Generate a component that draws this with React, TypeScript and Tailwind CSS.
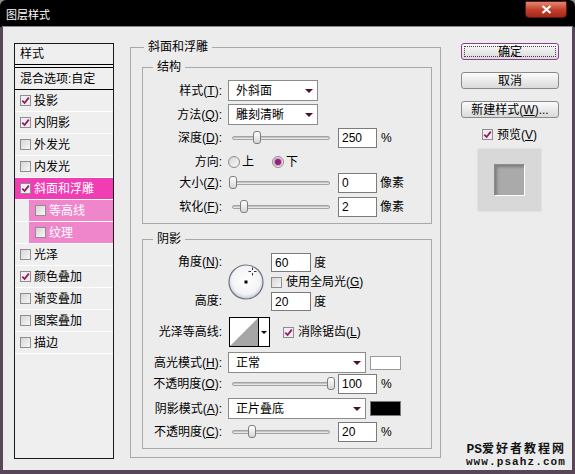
import React from 'react'

type StyleRow = { label: string; checked?: boolean; active?: boolean; sub?: boolean }

const STYLE_ROWS: StyleRow[] = [
  { label: '投影', checked: true },
  { label: '内阴影', checked: true },
  { label: '外发光' },
  { label: '内发光' },
  { label: '斜面和浮雕', checked: true, active: true },
  { label: '等高线', sub: true },
  { label: '纹理', sub: true },
  { label: '光泽' },
  { label: '颜色叠加', checked: true },
  { label: '渐变叠加' },
  { label: '图案叠加' },
  { label: '描边' },
]

function Check({ checked }: { checked?: boolean }) {
  return (
    <span
      className={`flex h-[11px] w-[11px] shrink-0 items-center justify-center border border-[#8e8e8e] ${
        checked ? 'bg-[#f4eaf2]' : 'bg-linear-to-br from-[#d6d6d6] to-[#f7f7f7]'
      }`}
    >
      {checked && (
        <svg width="9" height="9" viewBox="0 0 9 9">
          <path d="M1.3 4.6 L3.6 7 L7.8 1.6" fill="none" stroke="#8a1d5c" strokeWidth="1.8" />
        </svg>
      )}
    </span>
  )
}

function Radio({ on }: { on?: boolean }) {
  return (
    <span className="flex h-[12px] w-[12px] shrink-0 items-center justify-center rounded-full border border-[#8c8c8c] bg-linear-to-br from-[#d4d4d4] to-[#fafafa]">
      {on && <span className="h-[6px] w-[6px] rounded-full bg-[#961f7a] shadow-[0_0_0_1px_#d08cc0]" />}
    </span>
  )
}

function Arrow() {
  return <span className="h-0 w-0 border-x-[4px] border-t-[4px] border-x-transparent border-t-[#4a1030]" />
}

function Dropdown({ value, className }: { value: string; className: string }) {
  return (
    <div className={`ml-[6px] flex h-[21px] items-center justify-between border border-[#8b8b8b] bg-white pl-[7px] pr-[4px] ${className}`}>
      <span>{value}</span>
      <Arrow />
    </div>
  )
}

function NumBox({ value, className = 'ml-[8px] h-[20px] w-[39px]' }: { value: string; className?: string }) {
  return <div className={`flex items-center border border-[#7b7b7b] bg-white pl-[3px] ${className}`}>{value}</div>
}

function Slider({ thumb }: { thumb: string }) {
  return (
    <div className="relative ml-[10px] h-[4px] w-[98px] rounded-full border border-[#a3a3a3] bg-[#e6e6e6] shadow-[inset_0_1px_0_#c4c4c4]">
      <span className={`absolute top-[-6px] h-[13px] w-[8px] rounded-[3px] border border-[#7d7d7d] bg-linear-to-b from-white to-[#d6d6d6] ${thumb}`} />
    </div>
  )
}

function Row({ label, className, children }: { label: React.ReactNode; className: string; children?: React.ReactNode }) {
  return (
    <div className={`flex items-center ${className}`}>
      <div className="w-[79px] shrink-0 text-right">{label}</div>
      {children}
    </div>
  )
}

function Btn({ children, primary }: { children: React.ReactNode; primary?: boolean }) {
  return (
    <button
      className={`flex h-[17px] w-[98px] items-center justify-center rounded-[3px] border bg-linear-to-b from-[#fbfbfb] to-[#dadada] ${
        primary ? 'border-[#8e3c8e] p-[2px]' : 'border-[#8a8a8a]'
      }`}
    >
      {primary ? (
        <span className="flex h-full w-full items-center justify-center border border-dotted border-[#444]">{children}</span>
      ) : (
        <span>{children}</span>
      )}
    </button>
  )
}

export default function App() {
  return (
    <div className="h-[474px] w-[575px] bg-[#8f8f8f] font-['Liberation_Sans','Noto_Sans_CJK_SC',sans-serif] text-[12px] leading-[14px] text-black">
      <div className="flex h-full flex-col overflow-hidden rounded-t-[6px] bg-black">
        {/* title bar */}
        <div className="flex h-[26px] shrink-0 items-start">
          <span className="ml-[6px] mt-[8px] text-[11px] leading-[14px] text-white">图层样式</span>
          <button className="ml-auto mr-[8px] mt-[1px] flex h-[17px] w-[42px] items-center justify-center rounded-b-[4px] border border-[#5a1a10] bg-linear-to-b from-[#e08670] via-[#c4402c] to-[#a32818]">
            <svg width="11" height="9" viewBox="0 0 11 9">
              <path d="M1.5 1 L9.5 8 M9.5 1 L1.5 8" stroke="#fff" strokeWidth="2.2" />
            </svg>
          </button>
        </div>
        <div className="mx-[2px] h-px shrink-0 bg-[#8a8a8a]" />

        {/* body */}
        <div className="flex min-h-0 flex-1 border-x-[3px] border-b-[4px] border-[#574657] bg-[#ececec]">
          {/* style list */}
          <div className="ml-[11px] mt-[16px] h-[416px] w-[100px] shrink-0 border border-[#1a1a1a] bg-[#efefef]">
            <div className="flex h-[21px] items-center border-b border-black pl-[5px]">样式</div>
            <div className="mt-[2px] flex h-[23px] items-center border-y border-black pl-[5px]">混合选项:自定</div>
            {STYLE_ROWS.map((r) =>
              r.sub ? (
                <div key={r.label} className="h-[22px] border-b border-white pl-[14px]">
                  <div className="flex h-full items-center gap-[3px] bg-[#ef86cc] pl-[6px] text-white">
                    <Check checked={r.checked} />
                    <span>{r.label}</span>
                  </div>
                </div>
              ) : (
                <div
                  key={r.label}
                  className={`flex h-[22px] items-center gap-[3px] border-b border-white pl-[5px] ${
                    r.active ? 'bg-[#f03db3] text-white' : ''
                  }`}
                >
                  <Check checked={r.checked} />
                  <span>{r.label}</span>
                </div>
              )
            )}
          </div>

          {/* bevel & emboss */}
          <fieldset className="ml-[16px] mt-[12px] h-[419px] w-[311px] shrink-0 border border-[#a9a9a9]">
            <legend className="ml-[13px] px-[4px] leading-[16px]">斜面和浮雕</legend>

            <fieldset className="ml-[11px] mt-[4px] h-[165px] w-[290px] border border-[#a9a9a9]">
              <legend className="ml-[10px] px-[4px] leading-[16px]">结构</legend>
              <Row label={<>样式(<u>T</u>):</>} className="mt-[5px] h-[21px]">
                <Dropdown value="外斜面" className="w-[90px]" />
              </Row>
              <Row label={<>方法(<u>Q</u>):</>} className="mt-[3px] h-[21px]">
                <Dropdown value="雕刻清晰" className="w-[90px]" />
              </Row>
              <Row label={<>深度(<u>D</u>):</>} className="mt-[3px] h-[20px]">
                <Slider thumb="left-[20px]" />
                <NumBox value="250" />
                <span className="ml-[4px]">%</span>
              </Row>
              <Row label="方向:" className="mt-[4px] h-[20px]">
                <span className="ml-[6px]">
                  <Radio />
                </span>
                <span className="ml-[2px]">上</span>
                <span className="ml-[18px]">
                  <Radio on />
                </span>
                <span className="ml-[2px]">下</span>
              </Row>
              <Row label={<>大小(<u>Z</u>):</>} className="mt-[1px] h-[20px]">
                <Slider thumb="left-[-4px]" />
                <NumBox value="0" />
                <span className="ml-[3px]">像素</span>
              </Row>
              <Row label={<>软化(<u>F</u>):</>} className="mt-[4px] h-[20px]">
                <Slider thumb="left-[7px]" />
                <NumBox value="2" />
                <span className="ml-[3px]">像素</span>
              </Row>
            </fieldset>

            <fieldset className="ml-[11px] mt-[7px] h-[218px] w-[290px] border border-[#a9a9a9]">
              <legend className="ml-[10px] px-[4px] leading-[16px]">阴影</legend>

              <div className="mt-[6px] flex">
                <div className="flex h-[58px] w-[79px] shrink-0 flex-col justify-between text-right">
                  <div className="h-[19px] leading-[19px]">
                    角度(<u>N</u>):
                  </div>
                  <div className="h-[19px] leading-[19px]">高度:</div>
                </div>
                <div className="ml-[6px] self-center">
                  <svg width="36" height="36" viewBox="0 0 36 36">
                    <defs>
                      <radialGradient id="dial" cx="50%" cy="45%" r="55%">
                        <stop offset="0" stopColor="#ffffff" />
                        <stop offset="0.75" stopColor="#f3f3f5" />
                        <stop offset="1" stopColor="#c3c8d4" />
                      </radialGradient>
                    </defs>
                    <circle cx="18" cy="18" r="17" fill="url(#dial)" stroke="#6d7483" strokeWidth="1.2" />
                    <rect x="16.5" y="16.5" width="3" height="3" fill="#000" />
                    <path d="M24.5 3.5v2.5M24.5 9v2.5M20.5 7.5h2.5M26 7.5h2.5" stroke="#333" strokeWidth="1" />
                  </svg>
                </div>
                <div className="ml-[7px] flex flex-col">
                  <div className="flex h-[19px] items-center">
                    <NumBox value="60" className="h-[19px] w-[40px]" />
                    <span className="ml-[3px]">度</span>
                  </div>
                  <div className="flex h-[20px] items-center gap-[4px]">
                    <Check />
                    <span>
                      使用全局光(<u>G</u>)
                    </span>
                  </div>
                  <div className="flex h-[19px] items-center">
                    <NumBox value="20" className="h-[19px] w-[40px]" />
                    <span className="ml-[3px]">度</span>
                  </div>
                </div>
              </div>

              <Row label="光泽等高线:" className="mt-[6px] h-[30px]">
                <div className="ml-[7px] flex h-[30px] w-[41px] border border-black bg-white">
                  <svg width="28" height="28" viewBox="0 0 28 28">
                    <polygon points="0,28 28,0 28,28" fill="#a6a6a6" />
                  </svg>
                  <div className="flex flex-1 items-center justify-center border-l border-black">
                    <span className="h-0 w-0 border-x-[3px] border-t-[3px] border-x-transparent border-t-black" />
                  </div>
                </div>
                <span className="ml-[13px] flex items-center gap-[4px]">
                  <Check checked />
                  <span>
                    消除锯齿(<u>L</u>)
                  </span>
                </span>
              </Row>

              <Row label={<>高光模式(<u>H</u>):</>} className="mt-[5px] h-[21px]">
                <Dropdown value="正常" className="w-[138px]" />
                <span className="ml-[4px] h-[14px] w-[31px] border border-[#9a9a9a] bg-white" />
              </Row>
              <Row label={<>不透明度(<u>O</u>):</>} className="mt-[1px] h-[20px]">
                <Slider thumb="left-[94px]" />
                <NumBox value="100" />
                <span className="ml-[4px]">%</span>
              </Row>
              <Row label={<>阴影模式(<u>A</u>):</>} className="mt-[4px] h-[21px]">
                <Dropdown value="正片叠底" className="w-[138px]" />
                <span className="ml-[4px] h-[15px] w-[31px] border border-[#7a7a7a] bg-black" />
              </Row>
              <Row label={<>不透明度(<u>C</u>):</>} className="mt-[3px] h-[20px]">
                <Slider thumb="left-[15px]" />
                <NumBox value="20" />
                <span className="ml-[4px]">%</span>
              </Row>
            </fieldset>
          </fieldset>

          {/* buttons + preview */}
          <div className="ml-[20px] mt-[16px] flex w-[106px] flex-col pb-[2px]">
            <Btn primary>确定</Btn>
            <div className="mt-[12px]">
              <Btn>取消</Btn>
            </div>
            <div className="mt-[12px]">
              <Btn>
                新建样式(<u>W</u>)...
              </Btn>
            </div>
            <div className="mt-[10px] flex h-[13px] items-center gap-[4px] pl-[21px]">
              <Check checked />
              <span>
                预览(<u>V</u>)
              </span>
            </div>
            <div className="ml-[16px] mt-[7px] flex h-[64px] w-[65px] items-center justify-center border border-[#e2e2e2] bg-[#d8d8d8]">
              <div className="h-[32px] w-[31px] border border-b-white border-l-[#8c8c8c] border-r-white border-t-[#8c8c8c] bg-[#aaaaaa] shadow-[inset_2px_2px_3px_#7c7c7c]" />
            </div>

            <div className="mt-auto flex flex-col items-end pr-[1px] font-bold text-[#141414]">
              <div className="flex h-[13px] items-center">
                <span className="font-['Liberation_Mono',monospace] text-[13px] leading-[13px]">PS</span>
                <span className="text-[12px] leading-[13px] tracking-[2px]">爱好者教程网</span>
              </div>
              <div className="h-[12px] font-['Liberation_Mono',monospace] text-[11px] leading-[12px] tracking-[1.1px]">www.psahz.com</div>
            </div>
          </div>
        </div>
      </div>
    </div>
  )
}
